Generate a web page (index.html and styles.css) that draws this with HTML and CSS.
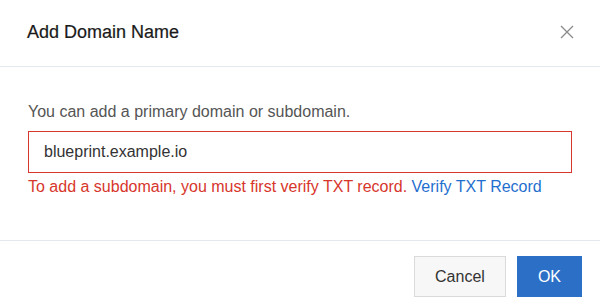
FILE: index.html
```html
<!DOCTYPE html>
<html lang="en">
<head>
    <meta charset="UTF-8">
    <meta name="viewport" content="width=device-width, initial-scale=1.0">
    <title>Add Domain Name</title>
    <link rel="stylesheet" href="styles.css">
</head>
<body>
    <div class="dialog">
        <header class="dialog-header">
            <h2>Add Domain Name</h2>
            <button class="close-btn" aria-label="Close">
                <svg width="14" height="14" viewBox="0 0 14 14">
                    <path d="M1 1 L13 13 M13 1 L1 13" stroke="#8a8a8a" stroke-width="1.3" fill="none"/>
                </svg>
            </button>
        </header>

        <main class="dialog-body">
            <p class="hint">You can add a primary domain or subdomain.</p>
            <input type="text" class="domain-input" value="blueprint.example.io">
            <p class="error">To add a subdomain, you must first verify TXT record. <a href="#">Verify TXT Record</a></p>
        </main>

        <footer class="dialog-footer">
            <button class="btn btn-cancel">Cancel</button>
            <button class="btn btn-ok">OK</button>
        </footer>
    </div>
</body>
</html>
```

FILE: styles.css
```css
body {
    margin: 0;
    font-family: 'Liberation Sans', Arial, sans-serif;
    background: #fff;
    color: #333;
}
.dialog {
    width: 600px;
    height: 308px;
    display: flex;
    flex-direction: column;
}
.dialog-header {
    height: 66px;
    display: flex;
    align-items: center;
    justify-content: space-between;
    padding: 0 26px 0 27px;
    border-bottom: 1px solid #e4e9ef;
}
.dialog-header h2 {
    margin: 0 0 2px;
    font-size: 18px;
    font-weight: normal;
    color: #1a1a1a;
    -webkit-text-stroke: 0.2px #1a1a1a;
}
.close-btn {
    background: none;
    border: none;
    padding: 0;
    width: 14px;
    height: 14px;
    margin-bottom: 2px;
    cursor: pointer;
}
.close-btn svg {
    display: block;
}
.dialog-body {
    flex: 1;
    padding: 34px 28px 0;
    border-bottom: 1px solid #e4e9ef;
}
.hint {
    margin: 0 0 9px;
    font-size: 16px;
    line-height: 21px;
    color: #555;
}
.domain-input {
    display: block;
    box-sizing: border-box;
    width: 100%;
    height: 42px;
    margin: 0;
    padding: 0 15px;
    border: 1px solid #d7362b;
    font-family: inherit;
    font-size: 16px;
    color: #333;
    outline: none;
}
.error {
    margin: 4px 0 0;
    font-size: 16px;
    line-height: 20px;
    color: #d7362b;
}
.error a {
    color: #1f6fcf;
    text-decoration: none;
}
.dialog-footer {
    display: flex;
    justify-content: flex-end;
    gap: 11px;
    padding: 15px 18px 11px;
}
.btn {
    height: 41px;
    padding: 0 20px;
    font-family: inherit;
    font-size: 16px;
    cursor: pointer;
}
.btn-cancel {
    background: #f7f7f7;
    border: 1px solid #dadada;
    color: #333;
}
.btn-ok {
    background: #2c6fc7;
    border: 1px solid #2c6fc7;
    color: #fff;
}
```
